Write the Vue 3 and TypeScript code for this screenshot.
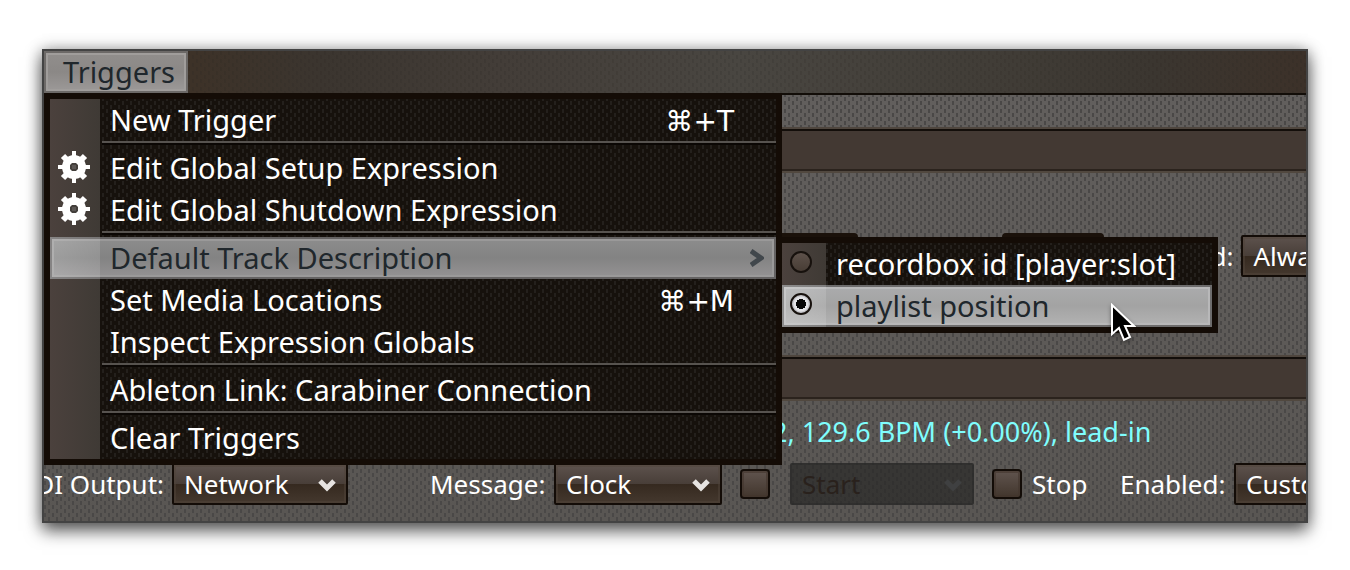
<script setup lang="ts">
import { ref } from 'vue'

interface MenuItem {
  label: string
  shortcut?: string
  gear?: boolean
  submenu?: boolean
}

const groups: MenuItem[][] = [
  [{ label: 'New Trigger', shortcut: '⌘+T' }],
  [
    { label: 'Edit Global Setup Expression', gear: true },
    { label: 'Edit Global Shutdown Expression', gear: true },
  ],
  [
    { label: 'Default Track Description', submenu: true },
    { label: 'Set Media Locations', shortcut: '⌘+M' },
    { label: 'Inspect Expression Globals' },
  ],
  [{ label: 'Ableton Link: Carabiner Connection' }],
  [{ label: 'Clear Triggers' }],
]

const descriptions = ['recordbox id [player:slot]', 'playlist position']
const description = ref('playlist position')
const sendStart = ref(false)
const sendStop = ref(false)
</script>

<template>
  <div class="window">
    <nav class="menubar">
      <button class="menu-title" type="button" aria-haspopup="menu" aria-expanded="true">Triggers</button>
    </nav>

    <main class="content">
      <div class="spacer"></div>
      <div class="bar"></div>
      <section class="trigger">
        <div class="row row-top">
          <span class="stub stub-left"></span>
          <span class="stub stub-right"></span>
          <label class="label enabled-top" for="enabled-a">Enabled:</label>
          <span class="combo combo-edge">
            <select id="enabled-a"><option>Always</option></select>
          </span>
        </div>
      </section>
      <div class="bar"></div>
      <section class="trigger-last">
        <p class="status">2, 129.6 BPM (+0.00%), lead-in</p>
        <div class="row">
          <label class="label output-label" for="output">MIDI Output:</label>
          <span class="combo combo-output">
            <select id="output"><option>Network</option></select>
            <svg class="chevron" viewBox="0 0 18 14" aria-hidden="true"><path d="M2 3l7 7 7-7" /></svg>
          </span>
          <label class="label message-label" for="message">Message:</label>
          <span class="combo combo-message">
            <select id="message"><option>Clock</option></select>
            <svg class="chevron" viewBox="0 0 18 14" aria-hidden="true"><path d="M2 3l7 7 7-7" /></svg>
          </span>
          <input v-model="sendStart" class="check" type="checkbox" aria-label="Start" />
          <span class="combo combo-start">
            <select aria-label="Start message" disabled><option>Start</option></select>
            <svg class="chevron" viewBox="0 0 18 14" aria-hidden="true"><path d="M2 3l7 7 7-7" /></svg>
          </span>
          <input id="stop" v-model="sendStop" class="check" type="checkbox" />
          <label class="label stop-label" for="stop">Stop</label>
          <label class="label enabled-label" for="enabled-b">Enabled:</label>
          <span class="combo combo-edge">
            <select id="enabled-b"><option>Custom</option></select>
          </span>
        </div>
      </section>
    </main>

    <div class="menu" role="menu">
      <div v-for="(group, g) in groups" :key="g" class="group">
        <button
          v-for="item in group"
          :key="item.label"
          type="button"
          role="menuitem"
          class="item"
          :class="{ active: item.submenu }"
        >
          <span class="gutter">
            <svg v-if="item.gear" class="gear" viewBox="0 0 32 32" aria-hidden="true">
              <circle cx="16" cy="16" r="12" fill="#fff" />
              <path d="M16 0v32M0 16h32" stroke="#fff" stroke-width="4" />
              <path d="M5 5l22 22M27 5L5 27" stroke="#fff" stroke-width="6" />
              <path d="M14 12h4l2 2v4l-2 2h-4l-2-2v-4z" fill="#433f3b" />
              <path d="M14 14h4v4h-4z" fill="#5b5754" />
            </svg>
          </span>
          <span class="text">{{ item.label }}</span>
          <span v-if="item.shortcut" class="shortcut">{{ item.shortcut }}</span>
          <svg v-if="item.submenu" class="arrow" viewBox="0 0 14 18" aria-hidden="true">
            <path d="M1 2l10 7-10 7" />
          </svg>
        </button>
      </div>
    </div>

    <div class="submenu" role="menu">
      <label v-for="d in descriptions" :key="d" class="item" :class="{ active: d === description }">
        <span class="gutter">
          <input v-model="description" class="radio" type="radio" name="description" :value="d" />
        </span>
        <span class="text">{{ d }}</span>
      </label>
    </div>

    <svg class="pointer" viewBox="0 0 26 40" aria-hidden="true">
      <path d="M2 2v29l7-6 5 12 6-3-5-11h9z" />
    </svg>
  </div>
</template>

<style>
body {
  background: #fff;
}
</style>

<style scoped>
.window {
  --weave: conic-gradient(from 0deg at 2px 4px, transparent 270deg, #4a4847 270deg);
  --weave-dark: conic-gradient(from 0deg at 2px 4px, transparent 270deg, #24201c 270deg);
  --weave-faint: conic-gradient(from 0deg at 2px 4px, transparent 270deg, rgba(40, 36, 32, 0.16) 270deg);
  position: relative;
  box-sizing: border-box;
  margin: 49px 42px 47px;
  border: 2px solid #434343;
  box-shadow: 0 8px 16px rgba(0, 0, 0, 0.6), 0 0 14px rgba(0, 0, 0, 0.3);
  font-family: "Noto Sans", "DejaVu Sans", sans-serif;
  font-size: 26px;
  line-height: 42px;
  color: #fff;
}

button,
select {
  margin: 0;
  font: inherit;
  color: inherit;
}

.menubar {
  display: flex;
  height: 42px;
  border-bottom: 2px solid #120d08;
  background: var(--weave-faint) 0 0 / 8px 8px, var(--weave-faint) 4px 4px / 8px 8px,
    linear-gradient(90deg, #3d3228 12%, #3b352f 22%, #433d38 36%, #494641 55%, #413d37 75%, #3b3630 88%, #3c3129 100%);
}

.menu-title {
  width: 144px;
  padding: 0 0 0 6px;
  border: 2px solid #6c6967;
  background: linear-gradient(#918e8c, #8b8886 50%, #9c9998);
  box-shadow: inset 0 0 0 2px #a09d9b;
  font-size: 29px;
  line-height: 38px;
  color: #20272c;
}

.content {
  overflow: hidden;
  background: var(--weave) 0 2px / 8px 8px, var(--weave) 4px 6px / 8px 8px,
    linear-gradient(#625f5d, #595653);
}

.spacer {
  height: 34px;
}

.bar {
  height: 38px;
  border: 2px solid #130e0a;
  border-width: 2px 0;
  border-bottom-color: #2b231d;
  background: #433933;
  box-shadow: 0 -2px #4f463e, 0 2px #51483f;
}

.row {
  display: flex;
  align-items: center;
  overflow: hidden;
  white-space: nowrap;
}

.label {
  flex: none;
}

.trigger {
  height: 186px;
}

.row-top {
  padding: 62px 0 0 714px;
}

.stub {
  flex: none;
  height: 46px;
  border-radius: 4px;
  background: #1a110a;
}

.stub-left {
  width: 100px;
}

.stub-right {
  width: 102px;
  margin-left: 144px;
}

.enabled-top {
  margin: 0 8px 0 24px;
}

.trigger-last {
  height: 110px;
  padding-top: 12px;
}

.status {
  margin: 0 0 10px 728px;
  font-size: 27px;
  color: #7ffdfd;
}

.combo {
  position: relative;
  flex: none;
  height: 42px;
}

.combo select {
  appearance: none;
  display: block;
  box-sizing: border-box;
  width: 100%;
  height: 42px;
  padding: 0 0 0 10px;
  border: 2px solid #130c07;
  border-radius: 2px;
  outline: none;
  background: linear-gradient(#5d524d, #483e38 50%, #35291f 50%, #44382e);
  box-shadow: inset 0 0 0 2px rgba(80, 68, 58, 0.5);
  line-height: 38px;
}

.chevron {
  position: absolute;
  top: 15px;
  right: 12px;
  width: 18px;
  height: 14px;
  fill: none;
  stroke: #e6e3e1;
  stroke-width: 5;
  pointer-events: none;
}

.output-label {
  display: flex;
  justify-content: flex-end;
  width: 120px;
  margin-right: 8px;
}

.combo-output {
  width: 176px;
}

.message-label {
  width: 116px;
  margin: 0 8px 0 82px;
}

.combo-message {
  width: 168px;
  margin-right: 18px;
}

.combo-start {
  width: 184px;
  margin: 0 18px 0 20px;
}

.combo-start select {
  border-color: rgba(40, 40, 38, 0.4);
  background: rgba(40, 40, 38, 0.7);
  box-shadow: none;
  color: #29211c;
  opacity: 1;
}

.combo-start .chevron {
  stroke: #3f4041;
}

.combo-edge {
  width: 176px;
}

.check {
  appearance: none;
  flex: none;
  box-sizing: border-box;
  width: 30px;
  height: 30px;
  margin: 0;
  border: 2px solid #130c07;
  border-radius: 4px;
  background: linear-gradient(#60544e, #42362d);
  box-shadow: inset 0 0 0 2px rgba(66, 54, 45, 0.6);
}

.stop-label {
  width: 88px;
  margin-left: 10px;
}

.enabled-label {
  width: 106px;
  margin-right: 8px;
}

.menu,
.submenu {
  position: absolute;
  border: 6px solid #140c06;
  background: var(--weave-dark) 0 2px / 8px 8px, var(--weave-dark) 4px 6px / 8px 8px, #16110c;
  font-size: 29px;
}

.menu {
  top: 42px;
  left: 0;
  width: 726px;
}

.submenu {
  top: 186px;
  left: 732px;
  width: 430px;
}

.group + .group {
  padding-top: 6px;
  background: linear-gradient(#57534f 0 2px, #0b0704 2px 4px, transparent 4px) 52px 0 / 674px 6px no-repeat,
    linear-gradient(90deg, #4b413d, #3f3a35) 0 0 / 50px 6px no-repeat;
}

.item {
  position: relative;
  display: flex;
  align-items: center;
  width: 100%;
  height: 42px;
  padding: 0;
  border: 0;
  background: none;
  text-align: left;
  white-space: nowrap;
}

.gutter {
  display: flex;
  flex: none;
  align-items: center;
  justify-content: center;
  box-sizing: border-box;
  width: 50px;
  height: 42px;
  padding: 0 2px 2px 0;
  background: linear-gradient(90deg, #4b413d, #3f3a35);
}

.submenu .gutter {
  width: 44px;
  padding: 0 6px 4px 0;
}

.text {
  flex: 1;
  padding-left: 10px;
}

.shortcut {
  padding: 4px 42px 0 0;
  font-family: "DejaVu Sans", sans-serif;
  font-size: 28px;
}

.active {
  background: linear-gradient(#8d8d8d, #838383 50%, #969495);
  box-shadow: inset 0 0 0 2px #646262, inset 0 0 0 4px #9a9999;
  color: #20272c;
}

.submenu .active {
  background: linear-gradient(#abacad, #a3a3a3 50%, #b4b4b4);
  box-shadow: inset 0 0 0 2px #6d6c6c, inset 0 0 0 4px #b8b8b9;
}

.active .gutter {
  background: linear-gradient(90deg, rgba(255, 255, 255, 0.22), rgba(255, 255, 255, 0.12));
}

.gear {
  width: 32px;
  height: 32px;
}

.arrow {
  width: 14px;
  height: 18px;
  margin-right: 12px;
  fill: none;
  stroke: #41474c;
  stroke-width: 5;
}

.radio {
  appearance: none;
  box-sizing: border-box;
  width: 22px;
  height: 22px;
  margin: 0;
  border: 2px solid #17110d;
  border-radius: 50%;
  background: linear-gradient(#5d514a, #483d35);
}

.radio:checked {
  background: radial-gradient(circle, #070707 0 5px, #e3e3e6 5px 7px, #c4c4c8 8px);
}

.pointer {
  position: absolute;
  top: 252px;
  left: 1066px;
  width: 26px;
  height: 40px;
  fill: #000;
  stroke: #fff;
  stroke-width: 2;
  filter: drop-shadow(0 2px 2px rgba(0, 0, 0, 0.4));
}
</style>
